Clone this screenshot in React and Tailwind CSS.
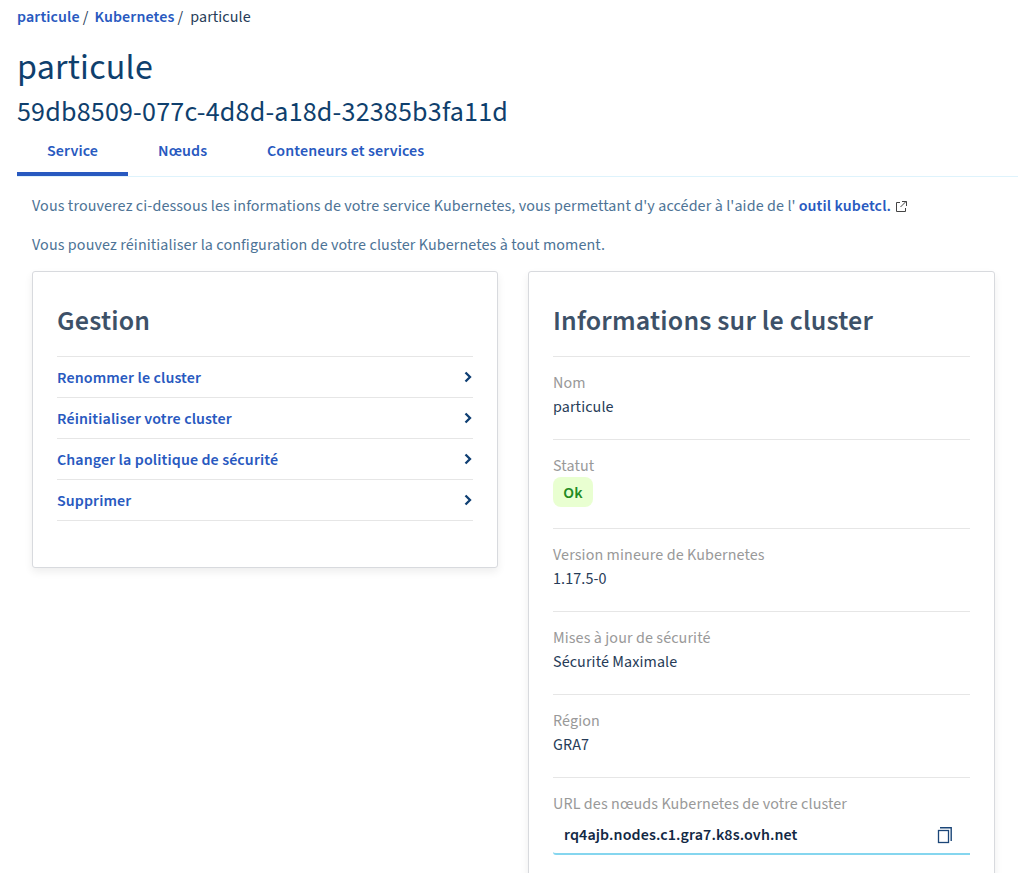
const menu = [
  "Renommer le cluster",
  "Réinitialiser votre cluster",
  "Changer la politique de sécurité",
  "Supprimer",
];

function Chevron() {
  return (
    <svg className="mb-px h-3 w-3" viewBox="0 0 12 12" fill="none" stroke="#0f3f73" strokeWidth="2.3">
      <path d="M4.5 1.5 9 6 4.5 10.5" />
    </svg>
  );
}

function ExternalIcon() {
  return (
    <svg className="ml-1 h-3 w-3" viewBox="0 0 12 12" fill="none" stroke="#444" strokeWidth="1">
      <path d="M5 2.5H1.5V11.5H10.5V8M5.5 7 11.3 1.2M7 1.5H11.5V6" />
    </svg>
  );
}

function CopyIcon() {
  return (
    <svg className="h-[18px] w-4" viewBox="0 0 16 18" fill="none" stroke="#1b4678">
      <rect x="1.5" y="4.5" width="10" height="12" strokeWidth="1.3" />
      <path d="M3 1.7H14.2V15" strokeWidth="1.4" />
    </svg>
  );
}

function Card({ title, className = "", children }) {
  return (
    <section
      className={`rounded-[3px] border border-[#d8dade] bg-white px-6 pt-[30px] shadow-[0_4px_8px_rgba(0,0,0,0.07)] ${className}`}
    >
      <h2 className="mb-[15px] text-[28px] leading-[39px] font-semibold tracking-[0.2px] text-[#3d5168]">{title}</h2>
      {children}
    </section>
  );
}

function Field({ label, children }) {
  return (
    <div className="border-t border-[#e6e6e6] pt-[14px] pb-5">
      <dt className="text-[#999]">{label}</dt>
      <dd className="text-[#263b57]">{children}</dd>
    </div>
  );
}

export default function App() {
  return (
    <div className="h-[873px] overflow-hidden bg-white pt-[5px] pl-[17px] font-['Source_Sans_Pro','Source_Sans_3','Noto_Sans_CJK_SC',sans-serif] text-base leading-6 tracking-[0.115px] whitespace-nowrap">
      <nav className="flex text-[#263b57]">
        <a className="font-semibold text-[#2859c0]">particule</a>
        <span className="ml-[3px]">/</span>
        <a className="ml-1.5 font-semibold text-[#2859c0]">Kubernetes</a>
        <span className="ml-[3px]">/</span>
        <span className="ml-[7px]">particule</span>
      </nav>
      <h1 className="mt-[14px] text-[36px] leading-[50px] tracking-[0.2px] text-[#0f3f6d]">particule</h1>
      <p className="text-[28px] leading-[39px] tracking-[0.2px] text-[#0f3f6d]">59db8509-077c-4d8d-a18d-32385b3fa11d</p>
      <div className="flex h-[45px] border-b border-[#def3fc] font-semibold text-[#2859c0]">
        <a className="h-11 w-[111px] border-b-4 border-[#2859c0] pt-[7px] pl-[30px]">Service</a>
        <a className="w-[109px] pt-[7px] pl-[30px]">Nœuds</a>
        <a className="pt-[7px] pl-[30px]">Conteneurs et services</a>
      </div>
      <main className="pt-[17px] pr-[23px] pl-[15px]">
        <p className="flex items-center text-[#4d7396]">
          Vous trouverez ci-dessous les informations de votre service Kubernetes, vous permettant d'y accéder à l'aide de l'
          <a className="ml-[3px] font-semibold text-[#2859c0]">outil kubetcl.</a>
          <ExternalIcon />
        </p>
        <p className="mt-[15px] text-[#4d7396]">
          Vous pouvez réinitialiser la configuration de votre cluster Kubernetes à tout moment.
        </p>
        <div className="mt-[14px] flex items-start gap-[30px]">
          <Card title="Gestion" className="h-[297px] w-[466px]">
            <ul className="border-t border-[#e6e6e6]">
              {menu.map((label) => (
                <li
                  key={label}
                  className="flex h-[41px] items-center justify-between border-b border-[#e6e6e6] pt-px font-semibold text-[#2859c0]"
                >
                  {label}
                  <Chevron />
                </li>
              ))}
            </ul>
          </Card>
          <Card title="Informations sur le cluster" className="h-[640px] w-[467px]">
            <dl>
              <Field label="Nom">particule</Field>
              <Field label="Statut">
                <span className="-mt-px mb-px flex h-[30px] w-10 items-center justify-center rounded-lg bg-[#e9ffd1] pt-px font-semibold text-[#228a22]">
                  Ok
                </span>
              </Field>
              <Field label="Version mineure de Kubernetes">1.17.5-0</Field>
              <Field label="Mises à jour de sécurité">Sécurité Maximale</Field>
              <Field label="Région">GRA7</Field>
              <Field label="URL des nœuds Kubernetes de votre cluster">
                <div className="flex h-[39px] items-center justify-between rounded-bl-[3px] border-b-2 border-[#85d6ef] pr-[17px] pl-[11px] font-semibold text-[#122844]">
                  rq4ajb.nodes.c1.gra7.k8s.ovh.net
                  <CopyIcon />
                </div>
              </Field>
            </dl>
          </Card>
        </div>
      </main>
    </div>
  );
}
